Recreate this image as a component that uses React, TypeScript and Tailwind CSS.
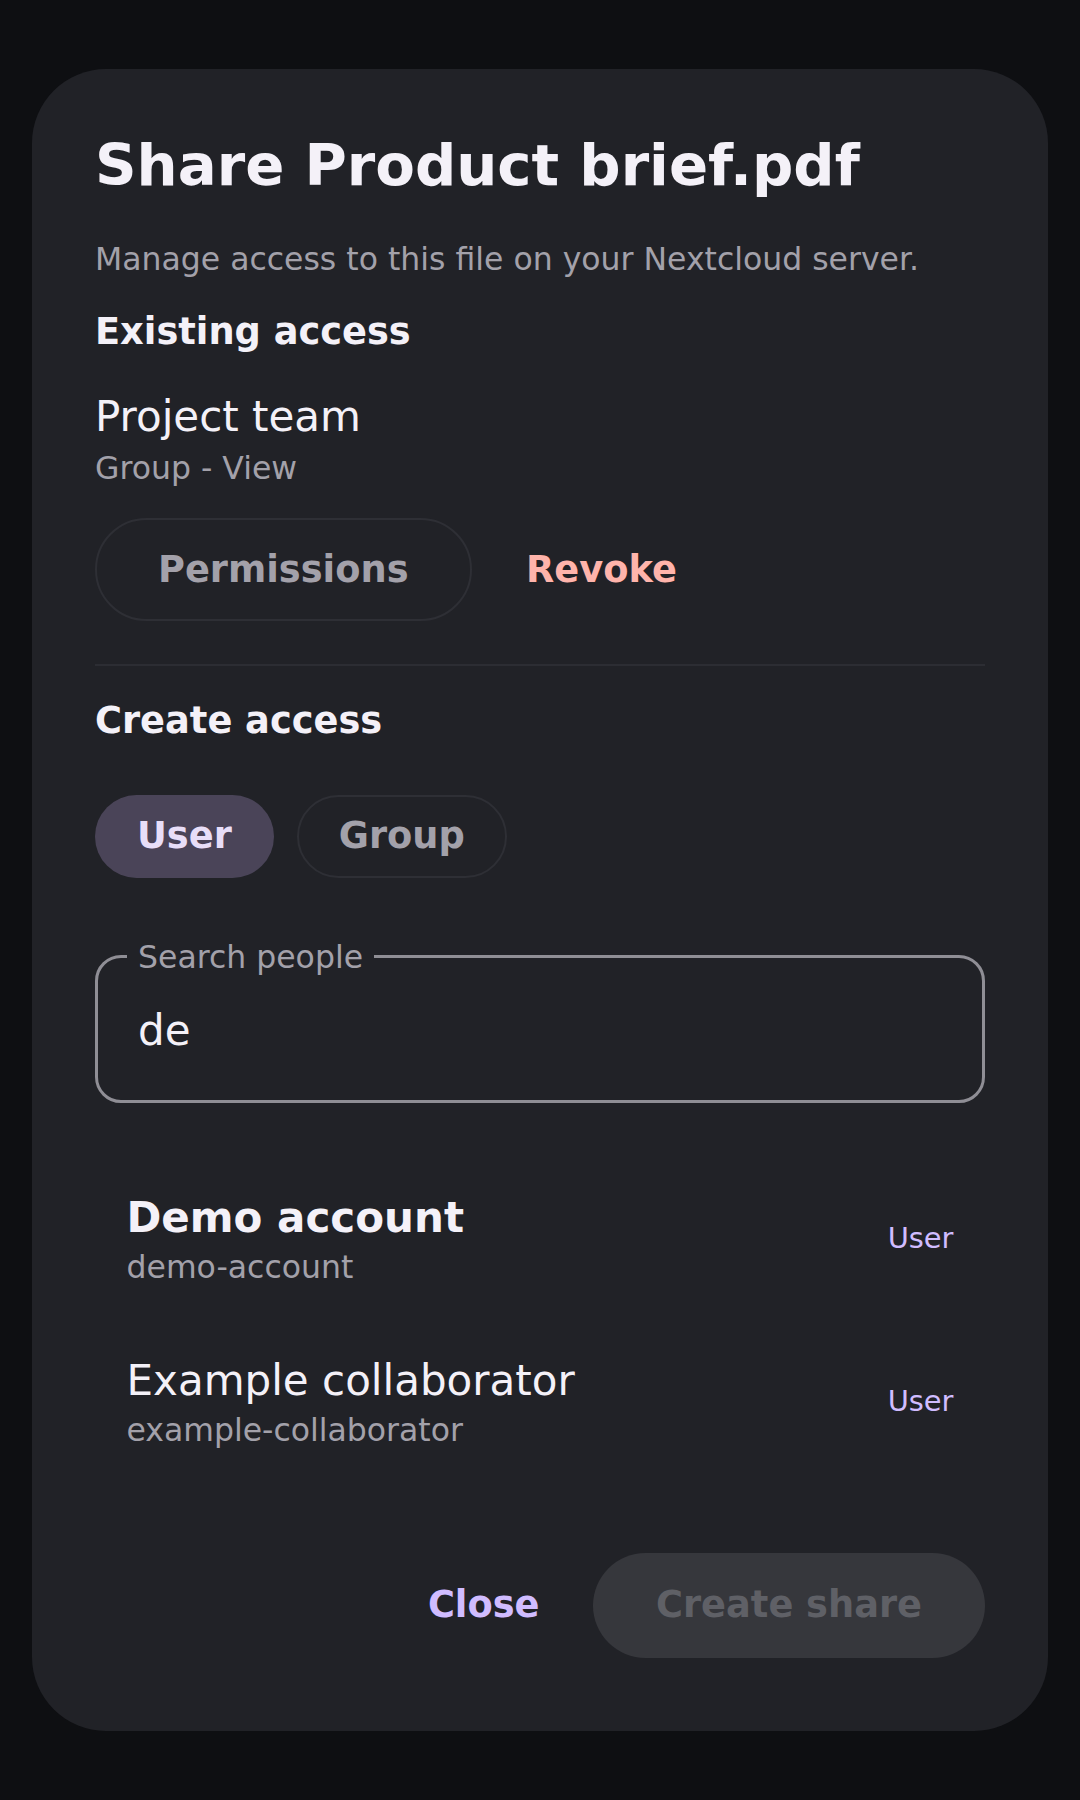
import React from "react";

const people = [
  { name: "Demo account", id: "demo-account", bold: true },
  { name: "Example collaborator", id: "example-collaborator", bold: false },
];

export default function App() {
  return (
    <div
      className="min-h-[1800px] w-[1080px] bg-[#0e0f12] px-[32px] pt-[69px]"
      style={{ fontFamily: '"DejaVu Sans", Verdana, sans-serif' }}
    >
      <div className="flex flex-col rounded-[74px] bg-[#212227] px-[63px] pt-[62px] pb-[73px]">
        <h1 className="text-[57.75px] leading-[69px] font-bold text-[#f4f1f8]">
          Share Product brief.pdf
        </h1>
        <p className="mt-[36px] text-[31.5px] leading-[47px] text-[#a3a1aa]">
          Manage access to this file on your Nextcloud server.
        </p>

        <h2 className="mt-[23px] text-[36.75px] leading-[51px] font-bold text-[#f4f1f8]">
          Existing access
        </h2>
        <div className="mt-[30px] text-[42px] leading-[59px] text-[#f4f1f8]">Project team</div>
        <div className="text-[31.5px] leading-[44px] text-[#a3a1aa]">Group - View</div>

        <div className="mt-[28px] flex items-center gap-[23px]">
          <button className="h-[103px] rounded-full border-[2px] border-[#2e2f35] px-[61px] text-[36.75px] font-bold text-[#a3a1aa]">
            Permissions
          </button>
          <button className="h-[103px] rounded-full px-[31.5px] text-[36.75px] font-bold text-[#ffb4ab]">
            Revoke
          </button>
        </div>

        <div className="mt-[43px] h-[2px] bg-[#2c2d33]" />

        <h2 className="mt-[28.5px] text-[36.75px] leading-[51px] font-bold text-[#f4f1f8]">
          Create access
        </h2>

        <div className="mt-[49px] flex items-center gap-[23px]">
          <button className="h-[83px] rounded-full bg-[#4a4458] px-[42px] text-[36.75px] font-bold text-[#e8def8]">
            User
          </button>
          <button className="h-[83px] rounded-full border-[2px] border-[#2e2f35] px-[40px] text-[36.75px] font-bold text-[#a3a1aa]">
            Group
          </button>
        </div>

        <fieldset className="mt-[60px] rounded-[26px] border-[3px] border-[#8f8e95] px-[29px]">
          <legend className="px-[11px] text-[31.5px] leading-[38px] text-[#a3a1aa]">Search people</legend>
          <div className="flex h-[124px] items-center pb-[15px]">
            <input
              readOnly
              value="de"
              className="h-[59px] w-full bg-transparent pl-[11px] text-[42px] text-[#f4f1f8] outline-none"
              style={{ fontFamily: '"DejaVu Sans", Verdana, sans-serif' }}
            />
          </div>
        </fieldset>

        <div className="mt-[54px] flex flex-col">
          {people.map((p) => (
            <div key={p.id} className="flex items-center justify-between px-[31.5px] py-[31.5px]">
              <div className="flex flex-col">
                <span
                  className={`text-[42px] leading-[59px] text-[#f4f1f8] ${p.bold ? "font-bold" : ""}`}
                >
                  {p.name}
                </span>
                <span className="text-[31.5px] leading-[41px] text-[#a3a1aa]">{p.id}</span>
              </div>
              <span className="text-[28.9px] leading-[40px] text-[#d0bcff]">User</span>
            </div>
          ))}
        </div>

        <div className="mt-[70px] flex items-center justify-end gap-[22px]">
          <button className="h-[105px] rounded-full px-[31.5px] text-[36.75px] font-bold text-[#d0bcff]">
            Close
          </button>
          <button className="h-[105px] rounded-full bg-[#36373c] px-[63px] text-[36.75px] font-bold text-[#5f6066]">
            Create share
          </button>
        </div>
      </div>
    </div>
  );
}
